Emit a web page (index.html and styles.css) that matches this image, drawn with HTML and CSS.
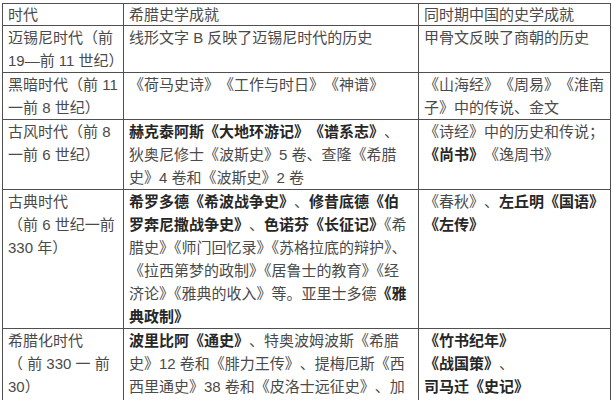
FILE: index.html
```html
<!DOCTYPE html>
<html lang="zh-CN">
<head>
<meta charset="utf-8">
<link rel="stylesheet" href="styles.css">
</head>
<body>
<table class="hist">
  <colgroup>
    <col class="c1"><col class="c2"><col class="c3">
  </colgroup>
  <thead>
    <tr class="head">
      <th>时代</th>
      <th>希腊史学成就</th>
      <th>同时期中国的史学成就</th>
    </tr>
  </thead>
  <tbody>
    <tr>
      <td>迈锡尼时代（前<br>19—前 11 世纪）</td>
      <td>线形文字 B 反映了迈锡尼时代的历史</td>
      <td>甲骨文反映了商朝的历史</td>
    </tr>
    <tr>
      <td>黑暗时代（前 11<br>一前 8 世纪）</td>
      <td>《荷马史诗》《工作与时日》《神谱》</td>
      <td>《山海经》《周易》《淮南<br>子》中的传说、金文</td>
    </tr>
    <tr>
      <td>古风时代（前 8<br>一前 6 世纪）</td>
      <td><b>赫克泰阿斯《大地环游记》《谱系志》</b>、<br>狄奥尼修士《波斯史》5 卷、查隆《希腊<br>史》4 卷和《波斯史》2 卷</td>
      <td>《诗经》中的历史和传说；<br><b>《尚书》</b>《逸周书》</td>
    </tr>
    <tr>
      <td>古典时代<br>（前 6 世纪一前<br>330 年）</td>
      <td><b>希罗多德《希波战争史》</b>、<b>修昔底德《伯<br>罗奔尼撒战争史》</b>、<b>色诺芬《长征记》</b><span class="tight">《希<br>腊史》《师门回忆录》《苏格拉底的辩护》、<br>《拉西第梦的政制》《居鲁士的教育》《经<br>济论》《雅典的收入》</span>等。亚里士多德<b>《雅<br>典政制》</b></td>
      <td>《春秋》、<b>左丘明《国语》</b><br><b>《左传》</b></td>
    </tr>
    <tr>
      <td>希腊化时代<br>（ 前 330 一 前<br>30）</td>
      <td><b>波里比阿《通史》</b>、特奥波姆波斯《希腊<br>史》12 卷和《腓力王传》、提梅厄斯《西<br>西里通史》38 卷和《皮洛士远征史》、加<br>图《创始记》、波西东尼斯《历史》</td>
      <td><b>《竹书纪年》<br>《战国策》</b>、<br><b>司马迁《史记》</b><br><b>刘向《新序》</b></td>
    </tr>
  </tbody>
</table>
</body>
</html>
```

FILE: styles.css
```css
html, body {
  margin: 0;
  padding: 0;
  background: #ffffff;
}

body {
  padding: 3px 0 0 2px;
  overflow: hidden;
  height: 400px;
  box-sizing: border-box;
}

.hist {
  width: 608px;
  table-layout: fixed;
  border-collapse: collapse;
  font-family: "Liberation Sans", "Noto Sans CJK SC", sans-serif;
  font-size: 15px;
  color: #4a4a4a;
  text-spacing-trim: space-all;
}

.c1 { width: 121px; }
.c2 { width: 295px; }
.c3 { width: 192px; }

.hist th,
.hist td {
  border: 1.5px solid #505050;
  padding: 0 5px;
  vertical-align: top;
  text-align: left;
  white-space: nowrap;
  line-height: 23px;
  font-weight: 400;
}

.hist .head th {
  line-height: 21px;
}

.hist b {
  font-weight: 700;
  color: #262626;
}

.tight {
  text-spacing-trim: normal;
}
```
